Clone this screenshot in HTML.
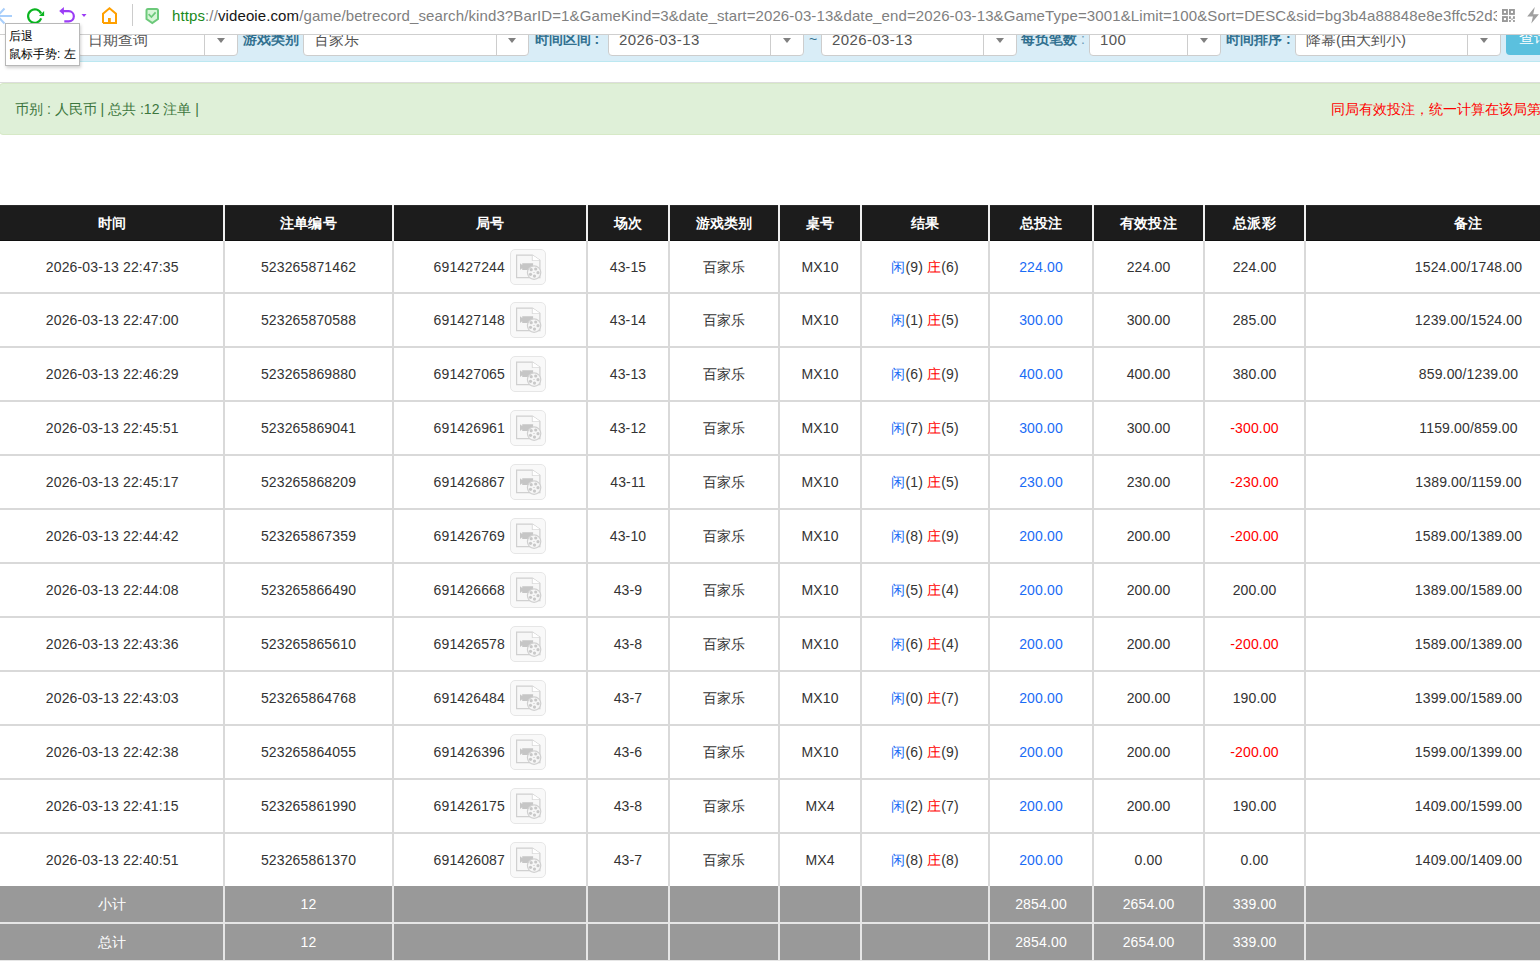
<!DOCTYPE html><html><head><meta charset="utf-8"><style>
*{margin:0;padding:0;box-sizing:border-box}
html,body{width:1540px;height:961px;overflow:hidden;background:#fff;font-family:"Liberation Sans",sans-serif;position:relative}
.abs{position:absolute}
#tb{position:absolute;left:0;top:0;width:1540px;height:35px;background:#fff;border-bottom:1px solid #cfcfcf;z-index:5}
#url{position:absolute;left:172px;top:6px;font-size:15px;letter-spacing:0.11px;color:#808080;white-space:nowrap;line-height:20px;width:1325px;overflow:hidden}
#url .g{color:#1a8a1a}#url .k{color:#151515}
#form{position:absolute;left:0;top:20px;width:1540px;height:42px;background:#d9edf7;border-bottom:1px solid #bce8f1}
.sel{position:absolute;top:-5px;height:40.5px;padding-top:3.5px;background:#fff;border:1px solid #cdcdcd;border-radius:4px;font-size:15px;color:#555;line-height:40px;padding-left:10px;white-space:nowrap}
.sel .dv{position:absolute;top:0;bottom:0;width:1px;background:#cdcdcd}
.sel .ar{position:absolute;top:22px;width:0;height:0;border-left:4px solid transparent;border-right:4px solid transparent;border-top:5px solid #808080;margin-left:1px}
.lb{position:absolute;top:-1.5px;font-size:14px;font-weight:bold;color:#31708f;line-height:40px;white-space:nowrap}
#alert{position:absolute;left:-1px;top:83px;width:1560px;height:52px;background:#dff0d8;border:1px solid #d6e9c6;border-radius:4px;font-size:14px;color:#3c763d;line-height:51px}
#hr{position:absolute;left:0;top:82px;width:1540px;height:1px;background:#ddd}
.row{position:absolute;left:0;width:1633px}
.c{position:absolute;top:0;bottom:0;text-align:center;font-size:14px;color:#333;white-space:nowrap;letter-spacing:0.15px}
.hd{background:#1c1c1c;top:205px;height:36px}
.hd .c{color:#fff;font-weight:bold;line-height:36px;background:#1c1c1c;box-shadow:inset 0 1px 0 #2a2a2a,inset 0 -1px 0 #101010}
.vb{position:absolute;width:2px}
.body .c{line-height:52px}
.blue{color:#1a6cf5}.red{color:#f00}
.ic{position:absolute;top:8px}
.ft{background:#e6e6e6}
.ft .c{background:#999;color:#fff;line-height:36px}
</style></head><body>
<div class="row hd" style="top:205px;height:36px;background:#f0f0f0">
<div class="c" style="left:0px;width:223px;padding-left:1.5px">时间</div>
<div class="c" style="left:225px;width:167px">注单编号</div>
<div class="c" style="left:394px;width:192px">局号</div>
<div class="c" style="left:588px;width:80px">场次</div>
<div class="c" style="left:670px;width:108px">游戏类别</div>
<div class="c" style="left:780px;width:80px">桌号</div>
<div class="c" style="left:862px;width:126px">结果</div>
<div class="c" style="left:990px;width:102px">总投注</div>
<div class="c" style="left:1094px;width:109px">有效投注</div>
<div class="c" style="left:1205px;width:99px">总派彩</div>
<div class="c" style="left:1306px;width:325px">备注</div>
</div>
<div class="row body" style="top:241px;height:53px;background:#d9d9d9">
<div class="c" style="left:0px;width:223px;padding-left:1.5px;bottom:2px;background:#fff">2026-03-13 22:47:35</div>
<div class="c" style="left:225px;width:167px;bottom:2px;background:#fff">523265871462</div>
<div class="c" style="left:394px;width:192px;bottom:2px;background:#fff;line-height:52px"><span style="position:absolute;right:81px">691427244</span><svg class="ic" style="left:116px" width="36" height="36" viewBox="0 0 36 36"><rect x="0.5" y="0.5" width="35" height="35" rx="4.5" fill="#f9f9f9" stroke="#e6e6e6"/><path d="M6.6 6.1H22.4L29.9 11.4V28.6H6.6Z" fill="#f7f7f7" stroke="#d0d0d0" stroke-width="1.2"/><path d="M22.4 6.3V11.3H29.9" fill="#fff" stroke="#d0d0d0" stroke-width="1.1"/><path d="M22.6 6.4L29.7 11.2H22.6Z" fill="#fff"/><path d="M10 14.2L12.2 16V14.2H23.1V21H12.2V19.2L10 21Z" fill="#c6c6c6"/><circle cx="24.1" cy="23.6" r="6.7" fill="#f6f6f6" stroke="#d0d0d0" stroke-width="1.2"/><g fill="#c8c8c8"><circle cx="21.2" cy="20.7" r="1.6"/><circle cx="25.7" cy="20" r="1.6"/><circle cx="28" cy="23.7" r="1.6"/><circle cx="24.5" cy="27.1" r="1.6"/><circle cx="20.5" cy="25.3" r="1.6"/><rect x="23.3" y="23.1" width="1.4" height="0.8"/></g></svg></div>
<div class="c" style="left:588px;width:80px;bottom:2px;background:#fff">43-15</div>
<div class="c" style="left:670px;width:108px;bottom:2px;background:#fff">百家乐</div>
<div class="c" style="left:780px;width:80px;bottom:2px;background:#fff">MX10</div>
<div class="c" style="left:862px;width:126px;bottom:2px;background:#fff"><span class="blue">闲</span>(9) <span class="red">庄</span>(6)</div>
<div class="c" style="left:990px;width:102px;bottom:2px;background:#fff"><span class="blue">224.00</span></div>
<div class="c" style="left:1094px;width:109px;bottom:2px;background:#fff">224.00</div>
<div class="c" style="left:1205px;width:99px;bottom:2px;background:#fff">224.00</div>
<div class="c" style="left:1306px;width:325px;bottom:2px;background:#fff">1524.00/1748.00</div>
</div>
<div class="row body" style="top:294px;height:54px;background:#d9d9d9">
<div class="c" style="left:0px;width:223px;padding-left:1.5px;bottom:2px;background:#fff">2026-03-13 22:47:00</div>
<div class="c" style="left:225px;width:167px;bottom:2px;background:#fff">523265870588</div>
<div class="c" style="left:394px;width:192px;bottom:2px;background:#fff;line-height:52px"><span style="position:absolute;right:81px">691427148</span><svg class="ic" style="left:116px" width="36" height="36" viewBox="0 0 36 36"><rect x="0.5" y="0.5" width="35" height="35" rx="4.5" fill="#f9f9f9" stroke="#e6e6e6"/><path d="M6.6 6.1H22.4L29.9 11.4V28.6H6.6Z" fill="#f7f7f7" stroke="#d0d0d0" stroke-width="1.2"/><path d="M22.4 6.3V11.3H29.9" fill="#fff" stroke="#d0d0d0" stroke-width="1.1"/><path d="M22.6 6.4L29.7 11.2H22.6Z" fill="#fff"/><path d="M10 14.2L12.2 16V14.2H23.1V21H12.2V19.2L10 21Z" fill="#c6c6c6"/><circle cx="24.1" cy="23.6" r="6.7" fill="#f6f6f6" stroke="#d0d0d0" stroke-width="1.2"/><g fill="#c8c8c8"><circle cx="21.2" cy="20.7" r="1.6"/><circle cx="25.7" cy="20" r="1.6"/><circle cx="28" cy="23.7" r="1.6"/><circle cx="24.5" cy="27.1" r="1.6"/><circle cx="20.5" cy="25.3" r="1.6"/><rect x="23.3" y="23.1" width="1.4" height="0.8"/></g></svg></div>
<div class="c" style="left:588px;width:80px;bottom:2px;background:#fff">43-14</div>
<div class="c" style="left:670px;width:108px;bottom:2px;background:#fff">百家乐</div>
<div class="c" style="left:780px;width:80px;bottom:2px;background:#fff">MX10</div>
<div class="c" style="left:862px;width:126px;bottom:2px;background:#fff"><span class="blue">闲</span>(1) <span class="red">庄</span>(5)</div>
<div class="c" style="left:990px;width:102px;bottom:2px;background:#fff"><span class="blue">300.00</span></div>
<div class="c" style="left:1094px;width:109px;bottom:2px;background:#fff">300.00</div>
<div class="c" style="left:1205px;width:99px;bottom:2px;background:#fff">285.00</div>
<div class="c" style="left:1306px;width:325px;bottom:2px;background:#fff">1239.00/1524.00</div>
</div>
<div class="row body" style="top:348px;height:54px;background:#d9d9d9">
<div class="c" style="left:0px;width:223px;padding-left:1.5px;bottom:2px;background:#fff">2026-03-13 22:46:29</div>
<div class="c" style="left:225px;width:167px;bottom:2px;background:#fff">523265869880</div>
<div class="c" style="left:394px;width:192px;bottom:2px;background:#fff;line-height:52px"><span style="position:absolute;right:81px">691427065</span><svg class="ic" style="left:116px" width="36" height="36" viewBox="0 0 36 36"><rect x="0.5" y="0.5" width="35" height="35" rx="4.5" fill="#f9f9f9" stroke="#e6e6e6"/><path d="M6.6 6.1H22.4L29.9 11.4V28.6H6.6Z" fill="#f7f7f7" stroke="#d0d0d0" stroke-width="1.2"/><path d="M22.4 6.3V11.3H29.9" fill="#fff" stroke="#d0d0d0" stroke-width="1.1"/><path d="M22.6 6.4L29.7 11.2H22.6Z" fill="#fff"/><path d="M10 14.2L12.2 16V14.2H23.1V21H12.2V19.2L10 21Z" fill="#c6c6c6"/><circle cx="24.1" cy="23.6" r="6.7" fill="#f6f6f6" stroke="#d0d0d0" stroke-width="1.2"/><g fill="#c8c8c8"><circle cx="21.2" cy="20.7" r="1.6"/><circle cx="25.7" cy="20" r="1.6"/><circle cx="28" cy="23.7" r="1.6"/><circle cx="24.5" cy="27.1" r="1.6"/><circle cx="20.5" cy="25.3" r="1.6"/><rect x="23.3" y="23.1" width="1.4" height="0.8"/></g></svg></div>
<div class="c" style="left:588px;width:80px;bottom:2px;background:#fff">43-13</div>
<div class="c" style="left:670px;width:108px;bottom:2px;background:#fff">百家乐</div>
<div class="c" style="left:780px;width:80px;bottom:2px;background:#fff">MX10</div>
<div class="c" style="left:862px;width:126px;bottom:2px;background:#fff"><span class="blue">闲</span>(6) <span class="red">庄</span>(9)</div>
<div class="c" style="left:990px;width:102px;bottom:2px;background:#fff"><span class="blue">400.00</span></div>
<div class="c" style="left:1094px;width:109px;bottom:2px;background:#fff">400.00</div>
<div class="c" style="left:1205px;width:99px;bottom:2px;background:#fff">380.00</div>
<div class="c" style="left:1306px;width:325px;bottom:2px;background:#fff">859.00/1239.00</div>
</div>
<div class="row body" style="top:402px;height:54px;background:#d9d9d9">
<div class="c" style="left:0px;width:223px;padding-left:1.5px;bottom:2px;background:#fff">2026-03-13 22:45:51</div>
<div class="c" style="left:225px;width:167px;bottom:2px;background:#fff">523265869041</div>
<div class="c" style="left:394px;width:192px;bottom:2px;background:#fff;line-height:52px"><span style="position:absolute;right:81px">691426961</span><svg class="ic" style="left:116px" width="36" height="36" viewBox="0 0 36 36"><rect x="0.5" y="0.5" width="35" height="35" rx="4.5" fill="#f9f9f9" stroke="#e6e6e6"/><path d="M6.6 6.1H22.4L29.9 11.4V28.6H6.6Z" fill="#f7f7f7" stroke="#d0d0d0" stroke-width="1.2"/><path d="M22.4 6.3V11.3H29.9" fill="#fff" stroke="#d0d0d0" stroke-width="1.1"/><path d="M22.6 6.4L29.7 11.2H22.6Z" fill="#fff"/><path d="M10 14.2L12.2 16V14.2H23.1V21H12.2V19.2L10 21Z" fill="#c6c6c6"/><circle cx="24.1" cy="23.6" r="6.7" fill="#f6f6f6" stroke="#d0d0d0" stroke-width="1.2"/><g fill="#c8c8c8"><circle cx="21.2" cy="20.7" r="1.6"/><circle cx="25.7" cy="20" r="1.6"/><circle cx="28" cy="23.7" r="1.6"/><circle cx="24.5" cy="27.1" r="1.6"/><circle cx="20.5" cy="25.3" r="1.6"/><rect x="23.3" y="23.1" width="1.4" height="0.8"/></g></svg></div>
<div class="c" style="left:588px;width:80px;bottom:2px;background:#fff">43-12</div>
<div class="c" style="left:670px;width:108px;bottom:2px;background:#fff">百家乐</div>
<div class="c" style="left:780px;width:80px;bottom:2px;background:#fff">MX10</div>
<div class="c" style="left:862px;width:126px;bottom:2px;background:#fff"><span class="blue">闲</span>(7) <span class="red">庄</span>(5)</div>
<div class="c" style="left:990px;width:102px;bottom:2px;background:#fff"><span class="blue">300.00</span></div>
<div class="c" style="left:1094px;width:109px;bottom:2px;background:#fff">300.00</div>
<div class="c" style="left:1205px;width:99px;bottom:2px;background:#fff"><span class="red">-300.00</span></div>
<div class="c" style="left:1306px;width:325px;bottom:2px;background:#fff">1159.00/859.00</div>
</div>
<div class="row body" style="top:456px;height:54px;background:#d9d9d9">
<div class="c" style="left:0px;width:223px;padding-left:1.5px;bottom:2px;background:#fff">2026-03-13 22:45:17</div>
<div class="c" style="left:225px;width:167px;bottom:2px;background:#fff">523265868209</div>
<div class="c" style="left:394px;width:192px;bottom:2px;background:#fff;line-height:52px"><span style="position:absolute;right:81px">691426867</span><svg class="ic" style="left:116px" width="36" height="36" viewBox="0 0 36 36"><rect x="0.5" y="0.5" width="35" height="35" rx="4.5" fill="#f9f9f9" stroke="#e6e6e6"/><path d="M6.6 6.1H22.4L29.9 11.4V28.6H6.6Z" fill="#f7f7f7" stroke="#d0d0d0" stroke-width="1.2"/><path d="M22.4 6.3V11.3H29.9" fill="#fff" stroke="#d0d0d0" stroke-width="1.1"/><path d="M22.6 6.4L29.7 11.2H22.6Z" fill="#fff"/><path d="M10 14.2L12.2 16V14.2H23.1V21H12.2V19.2L10 21Z" fill="#c6c6c6"/><circle cx="24.1" cy="23.6" r="6.7" fill="#f6f6f6" stroke="#d0d0d0" stroke-width="1.2"/><g fill="#c8c8c8"><circle cx="21.2" cy="20.7" r="1.6"/><circle cx="25.7" cy="20" r="1.6"/><circle cx="28" cy="23.7" r="1.6"/><circle cx="24.5" cy="27.1" r="1.6"/><circle cx="20.5" cy="25.3" r="1.6"/><rect x="23.3" y="23.1" width="1.4" height="0.8"/></g></svg></div>
<div class="c" style="left:588px;width:80px;bottom:2px;background:#fff">43-11</div>
<div class="c" style="left:670px;width:108px;bottom:2px;background:#fff">百家乐</div>
<div class="c" style="left:780px;width:80px;bottom:2px;background:#fff">MX10</div>
<div class="c" style="left:862px;width:126px;bottom:2px;background:#fff"><span class="blue">闲</span>(1) <span class="red">庄</span>(5)</div>
<div class="c" style="left:990px;width:102px;bottom:2px;background:#fff"><span class="blue">230.00</span></div>
<div class="c" style="left:1094px;width:109px;bottom:2px;background:#fff">230.00</div>
<div class="c" style="left:1205px;width:99px;bottom:2px;background:#fff"><span class="red">-230.00</span></div>
<div class="c" style="left:1306px;width:325px;bottom:2px;background:#fff">1389.00/1159.00</div>
</div>
<div class="row body" style="top:510px;height:54px;background:#d9d9d9">
<div class="c" style="left:0px;width:223px;padding-left:1.5px;bottom:2px;background:#fff">2026-03-13 22:44:42</div>
<div class="c" style="left:225px;width:167px;bottom:2px;background:#fff">523265867359</div>
<div class="c" style="left:394px;width:192px;bottom:2px;background:#fff;line-height:52px"><span style="position:absolute;right:81px">691426769</span><svg class="ic" style="left:116px" width="36" height="36" viewBox="0 0 36 36"><rect x="0.5" y="0.5" width="35" height="35" rx="4.5" fill="#f9f9f9" stroke="#e6e6e6"/><path d="M6.6 6.1H22.4L29.9 11.4V28.6H6.6Z" fill="#f7f7f7" stroke="#d0d0d0" stroke-width="1.2"/><path d="M22.4 6.3V11.3H29.9" fill="#fff" stroke="#d0d0d0" stroke-width="1.1"/><path d="M22.6 6.4L29.7 11.2H22.6Z" fill="#fff"/><path d="M10 14.2L12.2 16V14.2H23.1V21H12.2V19.2L10 21Z" fill="#c6c6c6"/><circle cx="24.1" cy="23.6" r="6.7" fill="#f6f6f6" stroke="#d0d0d0" stroke-width="1.2"/><g fill="#c8c8c8"><circle cx="21.2" cy="20.7" r="1.6"/><circle cx="25.7" cy="20" r="1.6"/><circle cx="28" cy="23.7" r="1.6"/><circle cx="24.5" cy="27.1" r="1.6"/><circle cx="20.5" cy="25.3" r="1.6"/><rect x="23.3" y="23.1" width="1.4" height="0.8"/></g></svg></div>
<div class="c" style="left:588px;width:80px;bottom:2px;background:#fff">43-10</div>
<div class="c" style="left:670px;width:108px;bottom:2px;background:#fff">百家乐</div>
<div class="c" style="left:780px;width:80px;bottom:2px;background:#fff">MX10</div>
<div class="c" style="left:862px;width:126px;bottom:2px;background:#fff"><span class="blue">闲</span>(8) <span class="red">庄</span>(9)</div>
<div class="c" style="left:990px;width:102px;bottom:2px;background:#fff"><span class="blue">200.00</span></div>
<div class="c" style="left:1094px;width:109px;bottom:2px;background:#fff">200.00</div>
<div class="c" style="left:1205px;width:99px;bottom:2px;background:#fff"><span class="red">-200.00</span></div>
<div class="c" style="left:1306px;width:325px;bottom:2px;background:#fff">1589.00/1389.00</div>
</div>
<div class="row body" style="top:564px;height:54px;background:#d9d9d9">
<div class="c" style="left:0px;width:223px;padding-left:1.5px;bottom:2px;background:#fff">2026-03-13 22:44:08</div>
<div class="c" style="left:225px;width:167px;bottom:2px;background:#fff">523265866490</div>
<div class="c" style="left:394px;width:192px;bottom:2px;background:#fff;line-height:52px"><span style="position:absolute;right:81px">691426668</span><svg class="ic" style="left:116px" width="36" height="36" viewBox="0 0 36 36"><rect x="0.5" y="0.5" width="35" height="35" rx="4.5" fill="#f9f9f9" stroke="#e6e6e6"/><path d="M6.6 6.1H22.4L29.9 11.4V28.6H6.6Z" fill="#f7f7f7" stroke="#d0d0d0" stroke-width="1.2"/><path d="M22.4 6.3V11.3H29.9" fill="#fff" stroke="#d0d0d0" stroke-width="1.1"/><path d="M22.6 6.4L29.7 11.2H22.6Z" fill="#fff"/><path d="M10 14.2L12.2 16V14.2H23.1V21H12.2V19.2L10 21Z" fill="#c6c6c6"/><circle cx="24.1" cy="23.6" r="6.7" fill="#f6f6f6" stroke="#d0d0d0" stroke-width="1.2"/><g fill="#c8c8c8"><circle cx="21.2" cy="20.7" r="1.6"/><circle cx="25.7" cy="20" r="1.6"/><circle cx="28" cy="23.7" r="1.6"/><circle cx="24.5" cy="27.1" r="1.6"/><circle cx="20.5" cy="25.3" r="1.6"/><rect x="23.3" y="23.1" width="1.4" height="0.8"/></g></svg></div>
<div class="c" style="left:588px;width:80px;bottom:2px;background:#fff">43-9</div>
<div class="c" style="left:670px;width:108px;bottom:2px;background:#fff">百家乐</div>
<div class="c" style="left:780px;width:80px;bottom:2px;background:#fff">MX10</div>
<div class="c" style="left:862px;width:126px;bottom:2px;background:#fff"><span class="blue">闲</span>(5) <span class="red">庄</span>(4)</div>
<div class="c" style="left:990px;width:102px;bottom:2px;background:#fff"><span class="blue">200.00</span></div>
<div class="c" style="left:1094px;width:109px;bottom:2px;background:#fff">200.00</div>
<div class="c" style="left:1205px;width:99px;bottom:2px;background:#fff">200.00</div>
<div class="c" style="left:1306px;width:325px;bottom:2px;background:#fff">1389.00/1589.00</div>
</div>
<div class="row body" style="top:618px;height:54px;background:#d9d9d9">
<div class="c" style="left:0px;width:223px;padding-left:1.5px;bottom:2px;background:#fff">2026-03-13 22:43:36</div>
<div class="c" style="left:225px;width:167px;bottom:2px;background:#fff">523265865610</div>
<div class="c" style="left:394px;width:192px;bottom:2px;background:#fff;line-height:52px"><span style="position:absolute;right:81px">691426578</span><svg class="ic" style="left:116px" width="36" height="36" viewBox="0 0 36 36"><rect x="0.5" y="0.5" width="35" height="35" rx="4.5" fill="#f9f9f9" stroke="#e6e6e6"/><path d="M6.6 6.1H22.4L29.9 11.4V28.6H6.6Z" fill="#f7f7f7" stroke="#d0d0d0" stroke-width="1.2"/><path d="M22.4 6.3V11.3H29.9" fill="#fff" stroke="#d0d0d0" stroke-width="1.1"/><path d="M22.6 6.4L29.7 11.2H22.6Z" fill="#fff"/><path d="M10 14.2L12.2 16V14.2H23.1V21H12.2V19.2L10 21Z" fill="#c6c6c6"/><circle cx="24.1" cy="23.6" r="6.7" fill="#f6f6f6" stroke="#d0d0d0" stroke-width="1.2"/><g fill="#c8c8c8"><circle cx="21.2" cy="20.7" r="1.6"/><circle cx="25.7" cy="20" r="1.6"/><circle cx="28" cy="23.7" r="1.6"/><circle cx="24.5" cy="27.1" r="1.6"/><circle cx="20.5" cy="25.3" r="1.6"/><rect x="23.3" y="23.1" width="1.4" height="0.8"/></g></svg></div>
<div class="c" style="left:588px;width:80px;bottom:2px;background:#fff">43-8</div>
<div class="c" style="left:670px;width:108px;bottom:2px;background:#fff">百家乐</div>
<div class="c" style="left:780px;width:80px;bottom:2px;background:#fff">MX10</div>
<div class="c" style="left:862px;width:126px;bottom:2px;background:#fff"><span class="blue">闲</span>(6) <span class="red">庄</span>(4)</div>
<div class="c" style="left:990px;width:102px;bottom:2px;background:#fff"><span class="blue">200.00</span></div>
<div class="c" style="left:1094px;width:109px;bottom:2px;background:#fff">200.00</div>
<div class="c" style="left:1205px;width:99px;bottom:2px;background:#fff"><span class="red">-200.00</span></div>
<div class="c" style="left:1306px;width:325px;bottom:2px;background:#fff">1589.00/1389.00</div>
</div>
<div class="row body" style="top:672px;height:54px;background:#d9d9d9">
<div class="c" style="left:0px;width:223px;padding-left:1.5px;bottom:2px;background:#fff">2026-03-13 22:43:03</div>
<div class="c" style="left:225px;width:167px;bottom:2px;background:#fff">523265864768</div>
<div class="c" style="left:394px;width:192px;bottom:2px;background:#fff;line-height:52px"><span style="position:absolute;right:81px">691426484</span><svg class="ic" style="left:116px" width="36" height="36" viewBox="0 0 36 36"><rect x="0.5" y="0.5" width="35" height="35" rx="4.5" fill="#f9f9f9" stroke="#e6e6e6"/><path d="M6.6 6.1H22.4L29.9 11.4V28.6H6.6Z" fill="#f7f7f7" stroke="#d0d0d0" stroke-width="1.2"/><path d="M22.4 6.3V11.3H29.9" fill="#fff" stroke="#d0d0d0" stroke-width="1.1"/><path d="M22.6 6.4L29.7 11.2H22.6Z" fill="#fff"/><path d="M10 14.2L12.2 16V14.2H23.1V21H12.2V19.2L10 21Z" fill="#c6c6c6"/><circle cx="24.1" cy="23.6" r="6.7" fill="#f6f6f6" stroke="#d0d0d0" stroke-width="1.2"/><g fill="#c8c8c8"><circle cx="21.2" cy="20.7" r="1.6"/><circle cx="25.7" cy="20" r="1.6"/><circle cx="28" cy="23.7" r="1.6"/><circle cx="24.5" cy="27.1" r="1.6"/><circle cx="20.5" cy="25.3" r="1.6"/><rect x="23.3" y="23.1" width="1.4" height="0.8"/></g></svg></div>
<div class="c" style="left:588px;width:80px;bottom:2px;background:#fff">43-7</div>
<div class="c" style="left:670px;width:108px;bottom:2px;background:#fff">百家乐</div>
<div class="c" style="left:780px;width:80px;bottom:2px;background:#fff">MX10</div>
<div class="c" style="left:862px;width:126px;bottom:2px;background:#fff"><span class="blue">闲</span>(0) <span class="red">庄</span>(7)</div>
<div class="c" style="left:990px;width:102px;bottom:2px;background:#fff"><span class="blue">200.00</span></div>
<div class="c" style="left:1094px;width:109px;bottom:2px;background:#fff">200.00</div>
<div class="c" style="left:1205px;width:99px;bottom:2px;background:#fff">190.00</div>
<div class="c" style="left:1306px;width:325px;bottom:2px;background:#fff">1399.00/1589.00</div>
</div>
<div class="row body" style="top:726px;height:54px;background:#d9d9d9">
<div class="c" style="left:0px;width:223px;padding-left:1.5px;bottom:2px;background:#fff">2026-03-13 22:42:38</div>
<div class="c" style="left:225px;width:167px;bottom:2px;background:#fff">523265864055</div>
<div class="c" style="left:394px;width:192px;bottom:2px;background:#fff;line-height:52px"><span style="position:absolute;right:81px">691426396</span><svg class="ic" style="left:116px" width="36" height="36" viewBox="0 0 36 36"><rect x="0.5" y="0.5" width="35" height="35" rx="4.5" fill="#f9f9f9" stroke="#e6e6e6"/><path d="M6.6 6.1H22.4L29.9 11.4V28.6H6.6Z" fill="#f7f7f7" stroke="#d0d0d0" stroke-width="1.2"/><path d="M22.4 6.3V11.3H29.9" fill="#fff" stroke="#d0d0d0" stroke-width="1.1"/><path d="M22.6 6.4L29.7 11.2H22.6Z" fill="#fff"/><path d="M10 14.2L12.2 16V14.2H23.1V21H12.2V19.2L10 21Z" fill="#c6c6c6"/><circle cx="24.1" cy="23.6" r="6.7" fill="#f6f6f6" stroke="#d0d0d0" stroke-width="1.2"/><g fill="#c8c8c8"><circle cx="21.2" cy="20.7" r="1.6"/><circle cx="25.7" cy="20" r="1.6"/><circle cx="28" cy="23.7" r="1.6"/><circle cx="24.5" cy="27.1" r="1.6"/><circle cx="20.5" cy="25.3" r="1.6"/><rect x="23.3" y="23.1" width="1.4" height="0.8"/></g></svg></div>
<div class="c" style="left:588px;width:80px;bottom:2px;background:#fff">43-6</div>
<div class="c" style="left:670px;width:108px;bottom:2px;background:#fff">百家乐</div>
<div class="c" style="left:780px;width:80px;bottom:2px;background:#fff">MX10</div>
<div class="c" style="left:862px;width:126px;bottom:2px;background:#fff"><span class="blue">闲</span>(6) <span class="red">庄</span>(9)</div>
<div class="c" style="left:990px;width:102px;bottom:2px;background:#fff"><span class="blue">200.00</span></div>
<div class="c" style="left:1094px;width:109px;bottom:2px;background:#fff">200.00</div>
<div class="c" style="left:1205px;width:99px;bottom:2px;background:#fff"><span class="red">-200.00</span></div>
<div class="c" style="left:1306px;width:325px;bottom:2px;background:#fff">1599.00/1399.00</div>
</div>
<div class="row body" style="top:780px;height:54px;background:#d9d9d9">
<div class="c" style="left:0px;width:223px;padding-left:1.5px;bottom:2px;background:#fff">2026-03-13 22:41:15</div>
<div class="c" style="left:225px;width:167px;bottom:2px;background:#fff">523265861990</div>
<div class="c" style="left:394px;width:192px;bottom:2px;background:#fff;line-height:52px"><span style="position:absolute;right:81px">691426175</span><svg class="ic" style="left:116px" width="36" height="36" viewBox="0 0 36 36"><rect x="0.5" y="0.5" width="35" height="35" rx="4.5" fill="#f9f9f9" stroke="#e6e6e6"/><path d="M6.6 6.1H22.4L29.9 11.4V28.6H6.6Z" fill="#f7f7f7" stroke="#d0d0d0" stroke-width="1.2"/><path d="M22.4 6.3V11.3H29.9" fill="#fff" stroke="#d0d0d0" stroke-width="1.1"/><path d="M22.6 6.4L29.7 11.2H22.6Z" fill="#fff"/><path d="M10 14.2L12.2 16V14.2H23.1V21H12.2V19.2L10 21Z" fill="#c6c6c6"/><circle cx="24.1" cy="23.6" r="6.7" fill="#f6f6f6" stroke="#d0d0d0" stroke-width="1.2"/><g fill="#c8c8c8"><circle cx="21.2" cy="20.7" r="1.6"/><circle cx="25.7" cy="20" r="1.6"/><circle cx="28" cy="23.7" r="1.6"/><circle cx="24.5" cy="27.1" r="1.6"/><circle cx="20.5" cy="25.3" r="1.6"/><rect x="23.3" y="23.1" width="1.4" height="0.8"/></g></svg></div>
<div class="c" style="left:588px;width:80px;bottom:2px;background:#fff">43-8</div>
<div class="c" style="left:670px;width:108px;bottom:2px;background:#fff">百家乐</div>
<div class="c" style="left:780px;width:80px;bottom:2px;background:#fff">MX4</div>
<div class="c" style="left:862px;width:126px;bottom:2px;background:#fff"><span class="blue">闲</span>(2) <span class="red">庄</span>(7)</div>
<div class="c" style="left:990px;width:102px;bottom:2px;background:#fff"><span class="blue">200.00</span></div>
<div class="c" style="left:1094px;width:109px;bottom:2px;background:#fff">200.00</div>
<div class="c" style="left:1205px;width:99px;bottom:2px;background:#fff">190.00</div>
<div class="c" style="left:1306px;width:325px;bottom:2px;background:#fff">1409.00/1599.00</div>
</div>
<div class="row body" style="top:834px;height:54px;background:#d9d9d9">
<div class="c" style="left:0px;width:223px;padding-left:1.5px;bottom:2px;background:#fff">2026-03-13 22:40:51</div>
<div class="c" style="left:225px;width:167px;bottom:2px;background:#fff">523265861370</div>
<div class="c" style="left:394px;width:192px;bottom:2px;background:#fff;line-height:52px"><span style="position:absolute;right:81px">691426087</span><svg class="ic" style="left:116px" width="36" height="36" viewBox="0 0 36 36"><rect x="0.5" y="0.5" width="35" height="35" rx="4.5" fill="#f9f9f9" stroke="#e6e6e6"/><path d="M6.6 6.1H22.4L29.9 11.4V28.6H6.6Z" fill="#f7f7f7" stroke="#d0d0d0" stroke-width="1.2"/><path d="M22.4 6.3V11.3H29.9" fill="#fff" stroke="#d0d0d0" stroke-width="1.1"/><path d="M22.6 6.4L29.7 11.2H22.6Z" fill="#fff"/><path d="M10 14.2L12.2 16V14.2H23.1V21H12.2V19.2L10 21Z" fill="#c6c6c6"/><circle cx="24.1" cy="23.6" r="6.7" fill="#f6f6f6" stroke="#d0d0d0" stroke-width="1.2"/><g fill="#c8c8c8"><circle cx="21.2" cy="20.7" r="1.6"/><circle cx="25.7" cy="20" r="1.6"/><circle cx="28" cy="23.7" r="1.6"/><circle cx="24.5" cy="27.1" r="1.6"/><circle cx="20.5" cy="25.3" r="1.6"/><rect x="23.3" y="23.1" width="1.4" height="0.8"/></g></svg></div>
<div class="c" style="left:588px;width:80px;bottom:2px;background:#fff">43-7</div>
<div class="c" style="left:670px;width:108px;bottom:2px;background:#fff">百家乐</div>
<div class="c" style="left:780px;width:80px;bottom:2px;background:#fff">MX4</div>
<div class="c" style="left:862px;width:126px;bottom:2px;background:#fff"><span class="blue">闲</span>(8) <span class="red">庄</span>(8)</div>
<div class="c" style="left:990px;width:102px;bottom:2px;background:#fff"><span class="blue">200.00</span></div>
<div class="c" style="left:1094px;width:109px;bottom:2px;background:#fff">0.00</div>
<div class="c" style="left:1205px;width:99px;bottom:2px;background:#fff">0.00</div>
<div class="c" style="left:1306px;width:325px;bottom:2px;background:#fff">1409.00/1409.00</div>
</div>
<div class="row ft" style="top:886px;height:38px">
<div class="c" style="left:0px;width:223px;padding-left:1.5px;bottom:2px">小计</div>
<div class="c" style="left:225px;width:167px;bottom:2px">12</div>
<div class="c" style="left:394px;width:192px;bottom:2px"></div>
<div class="c" style="left:588px;width:80px;bottom:2px"></div>
<div class="c" style="left:670px;width:108px;bottom:2px"></div>
<div class="c" style="left:780px;width:80px;bottom:2px"></div>
<div class="c" style="left:862px;width:126px;bottom:2px"></div>
<div class="c" style="left:990px;width:102px;bottom:2px">2854.00</div>
<div class="c" style="left:1094px;width:109px;bottom:2px">2654.00</div>
<div class="c" style="left:1205px;width:99px;bottom:2px">339.00</div>
<div class="c" style="left:1306px;width:325px;bottom:2px"></div>
</div>
<div class="row ft" style="top:924px;height:38px">
<div class="c" style="left:0px;width:223px;padding-left:1.5px;bottom:2px">总计</div>
<div class="c" style="left:225px;width:167px;bottom:2px">12</div>
<div class="c" style="left:394px;width:192px;bottom:2px"></div>
<div class="c" style="left:588px;width:80px;bottom:2px"></div>
<div class="c" style="left:670px;width:108px;bottom:2px"></div>
<div class="c" style="left:780px;width:80px;bottom:2px"></div>
<div class="c" style="left:862px;width:126px;bottom:2px"></div>
<div class="c" style="left:990px;width:102px;bottom:2px">2854.00</div>
<div class="c" style="left:1094px;width:109px;bottom:2px">2654.00</div>
<div class="c" style="left:1205px;width:99px;bottom:2px">339.00</div>
<div class="c" style="left:1306px;width:325px;bottom:2px"></div>
</div>
<div id="hr"></div>
<div id="alert"><span class="abs" style="left:15px">币别 : 人民币 | 总共 :12 注单 |</span><span class="abs" style="left:1330.5px;color:#f00;white-space:nowrap">同局有效投注，统一计算在该局第一笔注单</span></div>
<div id="form">
<div class="sel" style="left:77px;width:161px">日期查询<div class="dv" style="left:126px"></div><div class="ar" style="left:137.5px"></div></div>
<div class="sel" style="left:303px;width:226px">百家乐<div class="dv" style="left:192px"></div><div class="ar" style="left:203.0px"></div></div>
<div class="sel" style="left:608px;width:196px;letter-spacing:0.4px">2026-03-13<div class="dv" style="left:161px"></div><div class="ar" style="left:172.5px"></div></div>
<div class="sel" style="left:821px;width:196px;letter-spacing:0.4px">2026-03-13<div class="dv" style="left:161px"></div><div class="ar" style="left:172.5px"></div></div>
<div class="sel" style="left:1089px;width:132px;letter-spacing:0.4px">100<div class="dv" style="left:97px"></div><div class="ar" style="left:108.5px"></div></div>
<div class="sel" style="left:1295px;width:206px">降幂(由大到小)<div class="dv" style="left:171px"></div><div class="ar" style="left:182.5px"></div></div>
<div class="lb" style="left:243px">游戏类别</div>
<div class="lb" style="left:534.5px">时间区间 :</div>
<div class="lb" style="left:1021px">每负笔数 <span style="font-weight:normal;color:#6a9ab5">:</span></div>
<div class="lb" style="left:1226px">时间排序 :</div>
<div class="lb" style="left:809px;font-weight:normal">~</div>
<div class="abs" style="left:1506px;top:-5px;width:60px;height:40px;background:#5bc0de;border-radius:4px;color:#fff;font-size:15px;line-height:40px;padding-left:13px;padding-top:3px">查询</div>
</div>
<div id="tb">
<svg class="abs" style="left:0;top:0" width="170" height="34" viewBox="0 0 170 34">
<g fill="none" stroke="#a9cffb" stroke-width="2"><path d="M12 16H0"/><path d="M4.5 8.5L-2.5 16L4.5 23.5"/></g>
<path d="M41.2 18.4A6.75 6.75 0 1 1 41.1 13.5" fill="none" stroke="#0ab420" stroke-width="2.2"/><path d="M44.1 10.9V15.9H39Z" fill="#0ab420"/>
<path d="M63 11.2H68.75A5.1 5.1 0 0 1 68.75 21.4H64.3" fill="none" stroke="#9b3cf6" stroke-width="2.2"/><path d="M59.2 11L63.9 6.9V15Z" fill="#9b3cf6"/><path d="M81.5 14H86.5L84 17Z" fill="#9b3cf6"/>
<g fill="none" stroke="#ffa000" stroke-width="2"><path d="M103 23V13.8L109.5 8.3L116 13.8V23H103"/></g><rect x="108" y="18" width="2.8" height="5" fill="#ffa000"/>
<rect x="132" y="4" width="1" height="22" fill="#ccc"/>
<path d="M146.5 10.5Q146.5 9 148 9H156.5Q158 9 158 10.5V19L152.3 23L146.5 19Z" fill="#d8f6d8" stroke="#6cc97a" stroke-width="2"/>
<path d="M148.6 14.2L151.4 17.1L155.6 12.4" fill="none" stroke="#6cc97a" stroke-width="1.7"/>
</svg>
<div id="url"><span class="g">https</span>://<span class="k">videoie.com</span>/game/betrecord_search/kind3?BarID=1&amp;GameKind=3&amp;date_start=2026-03-13&amp;date_end=2026-03-13&amp;GameType=3001&amp;Limit=100&amp;Sort=DESC&amp;sid=bg3b4a88848e8e3ffc52d3a</div>
<svg class="abs" style="left:1500px;top:0" width="40" height="34" viewBox="0 0 40 34">
<g fill="none" stroke="#999" stroke-width="1.9"><rect x="2.95" y="9.95" width="4" height="4"/><rect x="9.95" y="9.95" width="4" height="4"/><rect x="2.95" y="17.05" width="4" height="4"/></g>
<g fill="#999"><rect x="9" y="16.2" width="1.9" height="2.7"/><rect x="13" y="16.2" width="1.9" height="2.7"/><path d="M10.9 17.8L12 19.5L13 17.8V18.9L12 20.4L10.9 18.9Z"/><rect x="9" y="20.1" width="1.9" height="1.8"/><rect x="13" y="20.1" width="1.9" height="1.8"/></g>
<path d="M34.8 7.1L27.2 16.6H32.9L31.3 23.4L38.9 14.3H33.2Z" fill="#a0a0a0"/>
</svg>
</div>
<div class="abs" style="left:0;top:35px;width:6px;height:35px;background:#fff;z-index:9"></div>
<div class="abs" style="left:5px;top:23px;width:75px;height:43px;background:#fff;border:1px solid #b8b8b8;box-shadow:1px 2px 3px rgba(0,0,0,.18);z-index:10;font-size:12px;color:#000;padding:3px 0 0 3px;line-height:18px;white-space:nowrap">后退<br>鼠标手势: 左</div>
</body></html>
